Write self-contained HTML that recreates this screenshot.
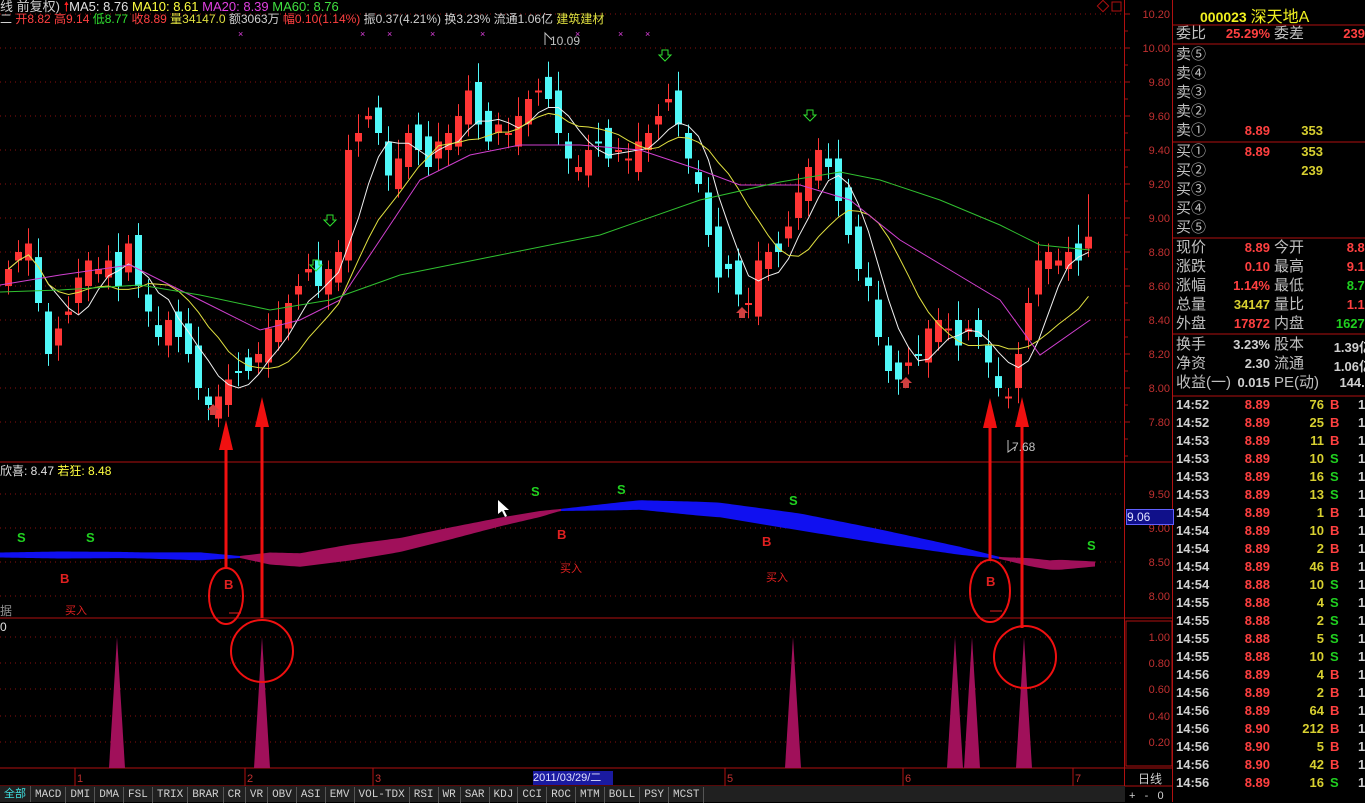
<!DOCTYPE html>
<html><head><meta charset="utf-8">
<style>
body{margin:0;background:#000;width:1365px;height:802px;overflow:hidden;position:relative;font-family:"Liberation Sans","Noto Sans CJK SC",sans-serif;}
.t{position:absolute;white-space:nowrap;font-size:12px;line-height:14px}
#rp{position:absolute;left:1173px;top:0;width:192px;height:802px;font-family:"Liberation Sans","Noto Sans CJK SC",sans-serif;font-weight:bold;font-size:13px}
#rp div{position:absolute;white-space:nowrap}
.g{color:#c0c0c0;font-weight:normal;font-size:15px;line-height:17px}
.r{color:#ff4040}.y{color:#d8d030}.gr{color:#20d020}.w{color:#d0d0d0}
#tabs{position:absolute;left:0;top:786px;height:16px;width:1125px;background:#202020;font-family:"Liberation Mono",monospace;font-size:11px;color:#d0d0d0}
#tabs span{display:inline-block;border-right:1px solid #555;padding:0 4px;line-height:16px}
</style></head><body>
<svg id="s" width="1365" height="802" style="position:absolute;left:0;top:0"></svg>
<div class="t" style="left:0;top:0;color:#d0d0d0;font-size:13px">线 前复权) <span style="color:#ff2020">🠕</span><span style="color:#e0e0e0">MA5: 8.76</span> <span style="color:#ffff40">MA10: 8.61</span> <span style="color:#e040e0">MA20: 8.39</span> <span style="color:#40e040">MA60: 8.76</span></div>
<div class="t" style="left:0;top:12px;color:#d0d0d0">二 <span class="r">开8.82 高9.14</span> <span style="color:#30e030">低8.77</span> <span class="r">收8.89</span> <span style="color:#e0e040">量34147.0</span> 额3063万 <span class="r">幅0.10(1.14%)</span> 振0.37(4.21%) 换3.23% 流通1.06亿 <span style="color:#e0e040">建筑建材</span></div>
<div class="t" style="left:550px;top:34px;color:#c0c0c0">10.09</div>
<div class="t" style="left:1012px;top:440px;color:#c0c0c0">7.68</div>
<div class="t" style="left:0;top:464px;color:#e0e0e0">欣喜: 8.47 <span style="color:#ffff40">若狂: 8.48</span></div>
<div class="t" style="left:0;top:604px;color:#909090">据</div>
<div class="t" style="left:0;top:620px;color:#e0e0e0">0</div>
<div class="t" style="left:1126px;top:509px;width:46px;height:14px;background:#10108a;border:1px solid #6060ff;color:#e0e0ff">9.06</div>
<div class="t" style="left:1138px;top:772px;color:#d0d0d0">日线</div>
<div class="t" style="left:1126px;top:789px;color:#d0d0d0;font-size:11px">&nbsp;+&nbsp;&nbsp;&nbsp;-&nbsp;&nbsp;&nbsp;0</div>
<div class="t" style="left:533px;top:771px;width:80px;background:#1a1aa0;color:#e0e0ff;font-size:11px">2011/03/29/二</div>
<div id="tabs"><span style="color:#40e0e0;font-family:'Liberation Sans','Noto Sans CJK SC',sans-serif">全部</span><span>MACD</span><span>DMI</span><span>DMA</span><span>FSL</span><span>TRIX</span><span>BRAR</span><span>CR</span><span>VR</span><span>OBV</span><span>ASI</span><span>EMV</span><span>VOL-TDX</span><span>RSI</span><span>WR</span><span>SAR</span><span>KDJ</span><span>CCI</span><span>ROC</span><span>MTM</span><span>BOLL</span><span>PSY</span><span>MCST</span></div>
<div id="rp"></div>
<script>
var S=document.getElementById('s'),h='';
function Y(p){return 14+(10.2-p)*170}
var lv=[10.2,10,9.8,9.6,9.4,9.2,9,8.8,8.6,8.4,8.2,8,7.8];
lv.forEach(function(p){var y=Y(p);h+='<line x1="0" y1="'+y+'" x2="1124" y2="'+y+'" stroke="#8a1010" stroke-dasharray="1,4"/><line x1="1124" y1="'+y+'" x2="1130" y2="'+y+'" stroke="#a01010"/><text x="1170" y="'+(y+4)+'" fill="#c03030" font-size="11" text-anchor="end" font-family="Liberation Sans">'+p.toFixed(2)+'</text>';});
for(var y=31;y<460;y+=17)h+='<line x1="1124" y1="'+y+'" x2="1128" y2="'+y+'" stroke="#a01010"/>';
[[9.5,494],[9,528],[8.5,562],[8,596]].forEach(function(a){h+='<line x1="0" y1="'+a[1]+'" x2="1124" y2="'+a[1]+'" stroke="#8a1010" stroke-dasharray="1,4"/><text x="1170" y="'+(a[1]+4)+'" fill="#c03030" font-size="11" text-anchor="end" font-family="Liberation Sans">'+a[0].toFixed(2)+'</text>';});
[[1,637],[.8,663],[.6,689],[.4,716],[.2,742]].forEach(function(a){h+='<line x1="0" y1="'+a[1]+'" x2="1124" y2="'+a[1]+'" stroke="#8a1010" stroke-dasharray="1,4"/><text x="1170" y="'+(a[1]+4)+'" fill="#c03030" font-size="11" text-anchor="end" font-family="Liberation Sans">'+a[0].toFixed(2)+'</text>';});
h+='<line x1="0" y1="462" x2="1173" y2="462" stroke="#b01010"/><line x1="0" y1="618" x2="1173" y2="618" stroke="#b01010"/><line x1="0" y1="768" x2="1173" y2="768" stroke="#b01010"/><line x1="0" y1="786" x2="1173" y2="786" stroke="#b01010"/>';
h+='<line x1="1124.5" y1="0" x2="1124.5" y2="786" stroke="#b01010"/><line x1="1172.5" y1="0" x2="1172.5" y2="802" stroke="#b01010"/><rect x="1126" y="621" width="46" height="145" fill="none" stroke="#b01010"/>';
[[75,'1'],[245,'2'],[373,'3'],[725,'5'],[903,'6'],[1073,'7']].forEach(function(a){h+='<line x1="'+a[0]+'" y1="768" x2="'+a[0]+'" y2="786" stroke="#b01010"/><text x="'+(a[0]+2)+'" y="782" fill="#c03030" font-size="11" font-family="Liberation Sans">'+a[1]+'</text>';});
var c=[8.7,8.8,8.85,8.5,8.2,8.35,8.45,8.65,8.75,8.7,8.75,8.6,8.85,8.6,8.45,8.3,8.4,8.3,8.2,8.0,7.9,7.95,8.05,8.1,8.1,8.2,8.35,8.4,8.5,8.6,8.7,8.6,8.7,8.8,9.4,9.5,9.6,9.5,9.25,9.35,9.5,9.4,9.3,9.45,9.5,9.6,9.75,9.55,9.45,9.55,9.5,9.6,9.7,9.75,9.7,9.5,9.35,9.3,9.4,9.45,9.35,9.4,9.35,9.45,9.5,9.6,9.7,9.55,9.35,9.2,8.9,8.65,8.7,8.55,8.5,8.75,8.8,8.8,8.95,9.15,9.3,9.4,9.3,9.1,8.9,8.7,8.6,8.3,8.1,8.05,8.15,8.2,8.35,8.4,8.35,8.25,8.35,8.3,8.15,8.0,7.95,8.2,8.5,8.75,8.8,8.75,8.8,8.75,8.89];
var ma5=[],ma10=[];
for(var i=0;i<c.length;i++){var x=5+i*10;var o=i?c[i-1]+(i%3?0.05:-0.08)*(i%2?1:-1):8.6;if(i==c.length-1)o=8.82;var up=c[i]>=o;var hi=Math.max(o,c[i])+0.05+(i%4)*0.02,lo=Math.min(o,c[i])-0.05-(i%3)*0.02;if(i==c.length-1){hi=9.14;lo=8.77}
var col=up?'#ff3535':'#50f8f8';var t=Y(Math.max(o,c[i])),b=Y(Math.min(o,c[i]));if(b-t<2)b=t+2;
h+='<line x1="'+(x+3.5)+'" y1="'+Y(hi)+'" x2="'+(x+3.5)+'" y2="'+Y(lo)+'" stroke="'+col+'"/><rect x="'+x+'" y="'+t+'" width="7" height="'+(b-t)+'" fill="'+col+'"/>';
var s5=0,n5=0;for(var k=Math.max(0,i-4);k<=i;k++){s5+=c[k];n5++}ma5.push((x+3.5)+','+Y(s5/n5));
var s10=0,n10=0;for(var k=Math.max(0,i-9);k<=i;k++){s10+=c[k];n10++}ma10.push((x+3.5)+','+Y(s10/n10));}
h+='<polyline points="'+ma5.join(' ')+'" fill="none" stroke="#f0f0f0"/><polyline points="'+ma10.join(' ')+'" fill="none" stroke="#e0e040"/>';
h+='<polyline points="0,285 60,275 130,265 200,300 260,330 300,320 340,300 380,240 420,180 470,155 520,145 580,145 640,150 700,170 740,185 800,185 850,200 900,240 950,270 1000,300 1040,355 1090,320" fill="none" stroke="#d040d0"/>';
h+='<polyline points="0,292 60,290 140,285 200,295 270,310 330,300 400,275 500,255 600,235 700,200 780,182 840,172 880,180 940,200 1000,225 1040,245 1090,250" fill="none" stroke="#30c030"/>';
[238,360,387,430,480,575,618,645].forEach(function(x){h+='<text x="'+x+'" y="37" fill="#e040e0" font-size="9">×</text>'});
h+='<polyline points="545,45 545,33 552,40" fill="none" stroke="#c0c0c0"/><polyline points="1008,440 1008,452 1015,447" fill="none" stroke="#c0c0c0"/>';
[[665,50],[330,215],[316,260],[810,110]].forEach(function(a){h+='<path d="M'+(a[0]-3)+' '+a[1]+'h6v5h3l-6,6l-6,-6h3z" fill="none" stroke="#30e030"/>'});
[[213,415],[742,318],[906,388]].forEach(function(a){h+='<path d="M'+(a[0]-3)+' '+a[1]+'h6v-5h3l-6,-6l-6,6h3z" fill="#d04040"/>'});
// indicator band: center points and signed thickness (+ blue, - purple)
var cp=[[0,555],[120,555],[240,557],[300,560],[400,545],[500,522],[560,510],[640,505],[720,510],[800,522],[900,540],[1000,558],[1050,565],[1095,564]];
var tp=[[0,3],[60,5],[140,4],[200,6],[240,0],[270,-10],[350,-14],[450,-10],[540,-4],[560,0],[620,6],[700,12],[800,15],[880,12],[960,6],[1000,0],[1030,-6],[1060,-8],[1095,-3]];
function ip(a,x){for(var i=0;i<a.length-1;i++){if(x>=a[i][0]&&x<=a[i+1][0]){var f=(x-a[i][0])/(a[i+1][0]-a[i][0]);return a[i][1]+f*(a[i+1][1]-a[i][1]);}}return a[a.length-1][1]}
for(var x=0;x<1095;x+=3){var x2=x+3;var c1=ip(cp,x),c2=ip(cp,x2),t1=ip(tp,x),t2=ip(tp,x2);var col=(t1+t2)>=0?'#1010f0':'#a0105a';
h+='<polygon points="'+x+','+(c1-Math.abs(t1)/2-1)+' '+x2+','+(c2-Math.abs(t2)/2-1)+' '+x2+','+(c2+Math.abs(t2)/2+1)+' '+x+','+(c1+Math.abs(t1)/2+1)+'" fill="'+col+'"/>';}
function txt(x,y,s,col,fs){h+='<text x="'+x+'" y="'+y+'" fill="'+col+'" font-size="'+(fs||13)+'" font-weight="bold" font-family="Liberation Sans,Noto Sans CJK SC,sans-serif">'+s+'</text>'}
[[17,542],[86,542],[531,496],[617,494],[789,505],[1087,550]].forEach(function(a){txt(a[0],a[1],'S','#20d020')});
[[60,583],[224,589],[557,539],[762,546],[986,586]].forEach(function(a){txt(a[0],a[1],'B','#e02020')});
[[65,614],[560,572],[766,581]].forEach(function(a){h+='<text x="'+a[0]+'" y="'+a[1]+'" fill="#e02020" font-size="11" font-family="Noto Sans CJK SC,sans-serif">买入</text>'});
h+='<line x1="229" y1="613" x2="241" y2="613" stroke="#e02020"/><line x1="990" y1="611" x2="1002" y2="611" stroke="#e02020"/>';
[117,262,793,955,972,1024].forEach(function(x){h+='<polygon points="'+(x-8)+',768 '+x+',637 '+(x+8)+',768" fill="#a0105a"/>'});
[[226,568,420],[262,618,397],[990,560,398],[1022,628,397]].forEach(function(a){h+='<line x1="'+a[0]+'" y1="'+a[1]+'" x2="'+a[0]+'" y2="'+(a[2]+25)+'" stroke="#f01010" stroke-width="3"/><polygon points="'+(a[0]-7)+','+(a[2]+30)+' '+a[0]+','+a[2]+' '+(a[0]+7)+','+(a[2]+30)+'" fill="#f01010"/>';});
h+='<ellipse cx="226" cy="596" rx="17" ry="28" fill="none" stroke="#f01010" stroke-width="2"/><ellipse cx="990" cy="591" rx="20" ry="31" fill="none" stroke="#f01010" stroke-width="2"/>';
h+='<ellipse cx="262" cy="651" rx="31" ry="31" fill="none" stroke="#f01010" stroke-width="2"/><ellipse cx="1025" cy="657" rx="31" ry="31" fill="none" stroke="#f01010" stroke-width="2"/>';
h+='<polygon points="498,500 498,514 502,511 505,517 507,516 504,510 509,510" fill="#fff"/>';
h+='<rect x="1099" y="2" width="8" height="8" fill="none" stroke="#b01010" transform="rotate(45 1103 6)"/><rect x="1112" y="2" width="9" height="9" fill="none" stroke="#b01010"/>';
[25,44,142,238,334,396].forEach(function(y){h+='<line x1="1173" y1="'+y+'" x2="1365" y2="'+y+'" stroke="#b01010"/>'});
S.innerHTML=h;
var r='',L=1173;
function d(x,y,s,c,al){r+='<div class="'+c+'" style="left:'+(x-L)+'px;top:'+y+'px'+(al?';width:80px;text-align:right;left:'+(x-L-80)+'px':'')+'">'+s+'</div>'}
r+='<div style="left:27px;top:3px;color:#f0f020;font-size:14px">000023 <span style="font-weight:normal;font-size:16px">深天地A</span></div>';
d(1176,25,'委比','g');d(1270,26,'25.29%','r',1);d(1274,25,'委差','g');d(1365,26,'239','r',1);
['卖⑤','卖④','卖③','卖②','卖①'].forEach(function(s,i){d(1176,46+i*19,s,'g')});
d(1270,123,'8.89','r',1);d(1323,123,'353','y',1);
['买①','买②','买③','买④','买⑤'].forEach(function(s,i){d(1176,143+i*19,s,'g')});
d(1270,144,'8.89','r',1);d(1323,144,'353','y',1);d(1323,163,'239','y',1);
var q=[['现价','8.89','r','今开','8.82','r'],['涨跌','0.10','r','最高','9.14','r'],['涨幅','1.14%','r','最低','8.77','gr'],['总量','34147','y','量比','1.15','r'],['外盘','17872','r','内盘','16275','gr']];
q.forEach(function(a,i){var y=240+i*19;d(1176,y-1,a[0],'g');d(1270,y,a[1],a[2],1);d(1274,y-1,a[3],'g');d(1372,y,a[4],a[5],1)});
var q2=[['换手','3.23%','股本','1.39亿'],['净资','2.30','流通','1.06亿'],['收益(一)','0.015','PE(动)','144.0']];
q2.forEach(function(a,i){var y=337+i*19;d(1176,y-1,a[0],'g');d(1270,y,a[1],'w',1);d(1274,y-1,a[2],'g');d(1372,y,a[3],'w',1)});
var tr=[['14:52','8.89','76','B'],['14:52','8.89','25','B'],['14:53','8.89','11','B'],['14:53','8.89','10','S'],['14:53','8.89','16','S'],['14:53','8.89','13','S'],['14:54','8.89','1','B'],['14:54','8.89','10','B'],['14:54','8.89','2','B'],['14:54','8.89','46','B'],['14:54','8.88','10','S'],['14:55','8.88','4','S'],['14:55','8.88','2','S'],['14:55','8.88','5','S'],['14:55','8.88','10','S'],['14:56','8.89','4','B'],['14:56','8.89','2','B'],['14:56','8.89','64','B'],['14:56','8.90','212','B'],['14:56','8.90','5','B'],['14:56','8.90','42','B'],['14:56','8.89','16','S']];
tr.forEach(function(a,i){var y=397+i*18;d(1176,y,a[0],'w');d(1270,y,a[1],'r',1);d(1324,y,a[2],'y',1);d(1330,y,a[3],a[3]=='B'?'r':'gr');d(1358,y,'1','w')});
document.getElementById('rp').innerHTML=r;
</script>
</body></html>
